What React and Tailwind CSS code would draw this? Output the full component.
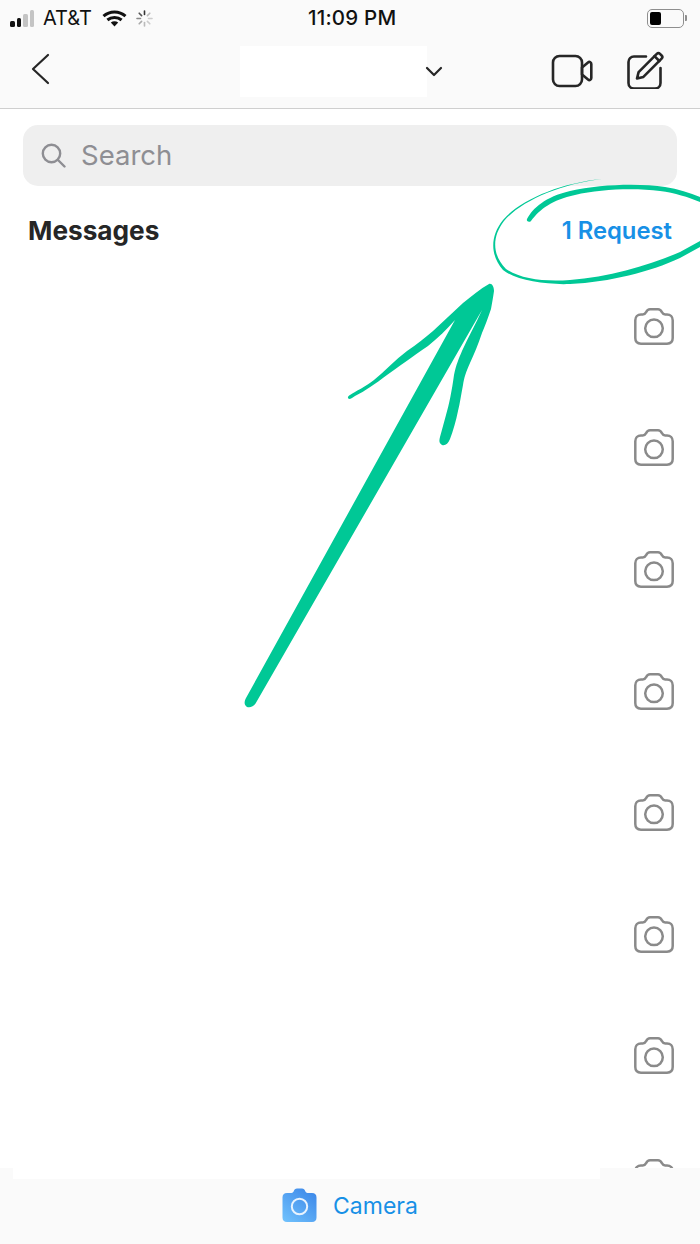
const FONT = "font-['Inter','Liberation_Sans',sans-serif]"

/* ─── Status bar icons ──────────────────────────────────────────── */
const Signal = () => (
  <div className="flex items-end gap-[2px] w-[27px]">
    <span className="w-[4.5px] h-[6px] rounded-[1.5px] bg-[#111]" />
    <span className="w-[4.5px] h-[9px] rounded-[1.5px] bg-[#111]" />
    <span className="w-[4.5px] h-[13px] rounded-[1.5px] bg-[#c4c4c4]" />
    <span className="w-[4.5px] h-[17px] rounded-[1.5px] bg-[#c4c4c4]" />
  </div>
)

const Wifi = () => (
  <svg width="25" height="17" viewBox="0 0 25 17" fill="none" stroke="#111" strokeWidth="3" strokeLinecap="butt">
    <path d="M1.5 6.2c6.2-5.6 15.8-5.6 22 0" />
    <path d="M5.4 10c4-3.5 10.2-3.5 14.2 0" />
    <path d="M12.5 16.5l-3.7-4c2.1-1.7 5.3-1.7 7.4 0z" fill="#111" stroke="none" />
  </svg>
)

const Spinner = () => (
  <svg width="17" height="17" viewBox="0 0 17 17" stroke="#777" strokeWidth="1.6" strokeLinecap="round">
    <path d="M8.5 1v3.5" stroke="#333" />
    <path d="M13.8 3.2l-2.4 2.4" stroke="#bbb" />
    <path d="M16 8.5h-3.5" stroke="#ccc" />
    <path d="M13.8 13.8l-2.4-2.4" stroke="#ccc" />
    <path d="M8.5 16v-3.5" stroke="#bbb" />
    <path d="M3.2 13.8l2.4-2.4" stroke="#aaa" />
    <path d="M1 8.5h3.5" stroke="#888" />
    <path d="M3.2 3.2l2.4 2.4" stroke="#555" />
  </svg>
)

const Battery = () => (
  <div className="flex items-center gap-[1px]">
    <div className="w-[37px] h-[19px] rounded-[5px] border border-[#8e8e8e] p-[2px]">
      <div className="w-[11px] h-full rounded-[2px] bg-black" />
    </div>
    <span className="w-[2px] h-[6px] rounded-r-[1px] bg-[#8e8e8e]" />
  </div>
)

/* ─── Header icons ──────────────────────────────────────────────── */
const VideoIcon = () => (
  <svg width="42" height="34" viewBox="0 0 42 34" fill="none" stroke="#262626" strokeWidth="2.6" strokeLinejoin="round">
    <rect x="2" y="2" width="29" height="30" rx="6.5" />
    <path d="M31 13.5l6-5c1.5-1.2 3.3-.3 3.3 1.5v14c0 1.8-1.8 2.7-3.3 1.5l-6-5z" />
  </svg>
)

const EditIcon = () => (
  <svg width="38" height="38" viewBox="0 0 38 38" fill="none" stroke="#262626" strokeWidth="2.6" strokeLinecap="round" strokeLinejoin="round">
    <path d="M20 5.5H8c-3.2 0-5.5 2.3-5.5 5.5v21c0 3.2 2.3 5.5 5.5 5.5h21c3.2 0 5.5-2.3 5.5-5.5V17" />
    <path d="M11 27.5l1.6-6.4L30.8 2.9c1-1 2.2-1 3.2 0l1.6 1.6c1 1 1 2.2 0 3.2L17.4 25.9z" />
    <path d="M28.5 5.2l4.8 4.8" />
  </svg>
)

const RowCamera = () => (
  <svg width="40" height="37" viewBox="0 0 40 37" fill="none" stroke="#8a8a8a" strokeWidth="2.5" strokeLinejoin="round">
    <path d="M7 6.5h1.8c1.5 0 2.5-.8 3.3-2.3C13 2.3 14.2 1.3 16 1.3h8c1.8 0 3 1 3.9 2.9.8 1.5 1.8 2.3 3.3 2.300H33c3.5 0 5.7 2.300 5.7 5.700v17.900c0 3.400-2.200 5.600-5.700 5.600H7c-3.500 0-5.700-2.200-5.700-5.600V12.200c0-3.400 2.200-5.700 5.700-5.700z" />
    <circle cx="20" cy="20.3" r="8.8" />
  </svg>
)

const BlueCamera = () => (
  <svg width="35" height="34" viewBox="0 0 35 34">
    <defs>
      <linearGradient id="cam" x1="0.1" y1="1" x2="0.9" y2="0">
        <stop offset="0" stopColor="#6fc0fc" />
        <stop offset="1" stopColor="#3b86e8" />
      </linearGradient>
    </defs>
    <path d="M5 5h4.5c1 0 1.7-.6 2.2-1.7C12.400 1.500 13.300.5 15 .5h5c1.700 0 2.600 1 3.300 2.800.5 1.100 1.200 1.700 2.200 1.700H30c3 0 4.500 1.700 4.500 4.500v20c0 2.800-1.500 4.500-4.500 4.500H5c-3 0-4.500-1.700-4.500-4.500v-20C.5 6.700 2 5 5 5z" fill="url(#cam)" />
    <circle cx="17.5" cy="18.5" r="7.7" fill="none" stroke="#e8f3fe" strokeWidth="2" />
  </svg>
)

/* ─── Hand drawn note over the page ─────────────────────────────── */
const Scribble = () => (
  <svg className="absolute left-0 top-0 pointer-events-none" width="700" height="1244" viewBox="0 0 700 1244" fill="#00c896">
    <path d="M602 179C560 183 520 200 503 220C490 236 490 255 503 270C515 280 545 285 570 284C610 282 650 272 680 258L700 247V241L680 252C650 265 610 277 570 280C545 282 520 279 506 269C493 256 491 238 504 221C521 201 560 184 602 179Z" />
    <path d="M527 219C533 208 545 197 570 191C600 184 640 183 665 187C678 189 690 193 700 197V202C688 197 675 193 660 191C635 188 600 189 575 195C552 200 540 209 531 221C529 223 526 221 527 219Z" />
    <path d="M489 284C492 283 494 287 494 291C493 298 492 303 491 309C488 318 485 326 482 333C478 345 474 354 470 363C466 372 464 378 463 385C461 395 460 403 458 411C456 421 453 431 450 439C448 444 445 446 442 445C439 443 439 441 440 437C442 430 444 422 446 415C449 405 452 390 454 375C456 365 459 358 462 351C468 337 476 324 482 310L257 701C254 707 250 708 247 707C244 705 244 702 246 698L455 320C447 329 438 338 428 346C412 357 398 367 387 375C375 384 365 391 355 396C353 397 351 399 349 399C347 398 348 396 350 395C356 391 365 387 374 380C385 371 395 360 407 351C417 344 425 338 433 331C443 322 453 312 463 303C472 296 480 289 489 284Z" />
  </svg>
)

const ROWS = [0, 1, 2, 3, 4, 5, 6, 7]

export default function App() {
  return (
    <div className={`relative w-[700px] h-[1244px] overflow-hidden bg-white flex flex-col ${FONT}`}>
      {/* Top bars */}
      <div className="h-[109px] bg-[#fafafa] border-b border-[#cfcfcf] shrink-0 flex flex-col">
        <div className="h-[36px] flex items-center pl-[10px] pr-[13px] text-[#111]">
          <div className="w-[280px] flex items-center">
            <Signal />
            <span className="ml-[6px] text-[20px] leading-none">AT&amp;T</span>
            <span className="ml-[10px]"><Wifi /></span>
            <span className="ml-[9px]"><Spinner /></span>
          </div>
          <span className="ml-[18px] text-[20.5px] font-medium leading-none tracking-[0.2px]">11:09 PM</span>
          <span className="ml-auto"><Battery /></span>
        </div>
        <div className="flex items-start">
          <svg className="ml-[31px] mt-[17px]" width="19" height="32" viewBox="0 0 19 32" fill="none" stroke="#262626" strokeWidth="2.2" strokeLinecap="round" strokeLinejoin="round">
            <path d="M17 2L2 16l15 14" />
          </svg>
          <div className="ml-[190px] mt-[10px] w-[187px] h-[51px] bg-white" />
          <svg className="ml-[-2px] mt-[30px]" width="18" height="12" viewBox="0 0 18 12" fill="none" stroke="#262626" strokeWidth="2.2" strokeLinecap="round" strokeLinejoin="round">
            <path d="M2 2l7 7 7-7" />
          </svg>
          <div className="ml-[108px] mt-[18px]"><VideoIcon /></div>
          <div className="ml-[33px] mt-[15px]"><EditIcon /></div>
        </div>
      </div>

      {/* Search */}
      <div className="mt-[16px] mx-[23px] h-[61px] rounded-[15px] bg-[#efefef] flex items-center pl-[18px] shrink-0">
        <svg width="25" height="25" viewBox="0 0 25 25" fill="none" stroke="#8e8e93" strokeWidth="2.4" strokeLinecap="round">
          <circle cx="10.5" cy="10.5" r="8.7" />
          <path d="M17 17l6.5 6.5" />
        </svg>
        <span className="ml-[15px] text-[27.5px] leading-none text-[#8e8e93]">Search</span>
      </div>

      {/* Messages heading */}
      <div className="mt-[14px] h-[62px] pl-[28px] pr-[28px] flex items-center justify-between shrink-0">
        <span className="text-[26.2px] font-bold text-[#262626] leading-none">Messages</span>
        <span className="text-[23.8px] font-semibold text-[#1790e6] leading-none">1 Request</span>
      </div>

      {/* Camera rows, the last one is cut by the bottom bar */}
      <div className="mt-[3.5px] flex-1 min-h-0 overflow-hidden">
        {ROWS.map(r => (
          <div key={r} className="h-[121.6px] flex items-center justify-end pr-[26px]">
            <RowCamera />
          </div>
        ))}
      </div>

      {/* Bottom bar */}
      <div className="h-[76px] bg-[#fafafa] shrink-0">
        <div className="ml-[13px] w-[587px] h-[11px] bg-white" />
        <div className="mt-[9px] flex items-center justify-center">
          <BlueCamera />
          <span className="ml-[16px] text-[23px] leading-none text-[#1790e6] pt-[2px]">Camera</span>
        </div>
      </div>

      <Scribble />
    </div>
  )
}
